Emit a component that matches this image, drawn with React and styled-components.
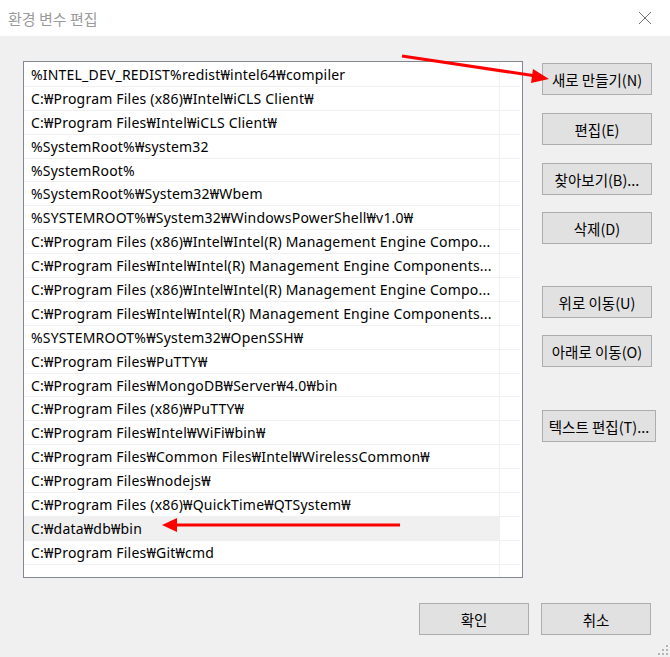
import React from 'react';
import styled, { createGlobalStyle } from 'styled-components';

/*
* 환경 변수 편집 대화상자
 */
const paths = [
  '%INTEL_DEV_REDIST%redist₩intel64₩compiler',
  'C:₩Program Files (x86)₩Intel₩iCLS Client₩',
  'C:₩Program Files₩Intel₩iCLS Client₩',
  '%SystemRoot%₩system32',
  '%SystemRoot%',
  '%SystemRoot%₩System32₩Wbem',
  '%SYSTEMROOT%₩System32₩WindowsPowerShell₩v1.0₩',
  'C:₩Program Files (x86)₩Intel₩Intel(R) Management Engine Compo...',
  'C:₩Program Files₩Intel₩Intel(R) Management Engine Components...',
  'C:₩Program Files (x86)₩Intel₩Intel(R) Management Engine Compo...',
  'C:₩Program Files₩Intel₩Intel(R) Management Engine Components...',
  '%SYSTEMROOT%₩System32₩OpenSSH₩',
  'C:₩Program Files₩PuTTY₩',
  'C:₩Program Files₩MongoDB₩Server₩4.0₩bin',
  'C:₩Program Files (x86)₩PuTTY₩',
  'C:₩Program Files₩Intel₩WiFi₩bin₩',
  'C:₩Program Files₩Common Files₩Intel₩WirelessCommon₩',
  'C:₩Program Files₩nodejs₩',
  'C:₩Program Files (x86)₩QuickTime₩QTSystem₩',
  'C:₩data₩db₩bin',
  'C:₩Program Files₩Git₩cmd',
  '',
];

const sideButtons = [
  { label: '새로 만들기(N)', gap: 2 },
  { label: '편집(E)', gap: 18 },
  { label: '찾아보기(B)...', gap: 18 },
  { label: '삭제(D)', gap: 17 },
  { label: '위로 이동(U)', gap: 42 },
  { label: '아래로 이동(O)', gap: 17 },
  { label: '텍스트 편집(T)...', gap: 43, wide: true },
];

const App = () => {
  return (
    <>
      <GlobalStyle />
      <Window>
        <TitleBar>
          <Title>환경 변수 편집</Title>
          <CloseIcon width="14" height="14" viewBox="0 0 14 14">
            <path d="M1 1 L13 13 M13 1 L1 13" stroke="#6f6f6f" strokeWidth="1" fill="none" />
          </CloseIcon>
        </TitleBar>
        <Body>
          <Main>
            <PathList>
              {paths.map((p, i) => (
                <Row key={i}>
                  <Cell $selected={i === 19}>{p}</Cell>
                  <Spare />
                </Row>
              ))}
            </PathList>
            <SideColumn>
              {sideButtons.map((b) => (
                <DialogButton key={b.label} $gap={b.gap} $wide={b.wide}>
                  {b.label}
                </DialogButton>
              ))}
            </SideColumn>
          </Main>
          <Footer>
            <DialogButton>확인</DialogButton>
            <DialogButton>취소</DialogButton>
          </Footer>
          <Grip width="12" height="12" viewBox="0 0 12 12">
            <rect x="9" y="1" width="2" height="2" fill="#b5b5b5" />
            <rect x="5" y="5" width="2" height="2" fill="#b5b5b5" />
            <rect x="9" y="5" width="2" height="2" fill="#b5b5b5" />
            <rect x="1" y="9" width="2" height="2" fill="#b5b5b5" />
            <rect x="5" y="9" width="2" height="2" fill="#b5b5b5" />
            <rect x="9" y="9" width="2" height="2" fill="#b5b5b5" />
          </Grip>
        </Body>
        <Arrows width="670" height="657" viewBox="0 0 670 657">
          <line x1="402" y1="56" x2="536" y2="76" stroke="#ff0000" strokeWidth="3" />
          <polygon points="549,79 533,69 531,83" fill="#ff0000" />
          <line x1="400" y1="525" x2="175" y2="525" stroke="#ff0000" strokeWidth="3" />
          <polygon points="162,525 177,518 177,532" fill="#ff0000" />
        </Arrows>
      </Window>
    </>
  );
};

/*
* styled-components 코드
 */
const GlobalStyle = createGlobalStyle`
  html, body {
    margin: 0;
    padding: 0;
    background: #f0f0f0;
  }
  body {
    font-family: "Noto Sans", "Noto Sans CJK KR", sans-serif;
  }
`;

const Window = styled.div`
  position: relative;
  width: 670px;
  height: 657px;
  display: flex;
  flex-direction: column;
  background: #f0f0f0;
  overflow: hidden;
`;

const TitleBar = styled.div`
  height: 36px;
  background: #ffffff;
  display: flex;
  align-items: center;
  justify-content: space-between;
  padding: 0 18px 0 8px;
  box-sizing: border-box;
`;

const Title = styled.div`
  font-family: "Noto Sans CJK KR", sans-serif;
  font-size: 15px;
  color: #9a9a9a;
`;

const CloseIcon = styled.svg`
  display: block;
`;

const Body = styled.div`
  position: relative;
  flex: 1;
  display: flex;
  flex-direction: column;
  padding: 25px 0 0 23px;
  box-sizing: border-box;
`;

const Main = styled.div`
  display: flex;
  align-items: flex-start;
`;

const PathList = styled.div`
  width: 500px;
  height: 517px;
  box-sizing: border-box;
  border: 1px solid #828790;
  background: #ffffff;
  padding-top: 1px;
  overflow: hidden;
`;

const Row = styled.div`
  display: flex;
  height: 23.9px;
  box-sizing: border-box;
  border-bottom: 1px solid #f0f0f0;
  margin-right: 2px;
`;

const Cell = styled.div`
  width: 476px;
  box-sizing: border-box;
  padding: 0 4px 0 7px;
  border-right: 1px solid #f0f0f0;
  background: ${(p) => (p.$selected ? '#f0f0f0' : 'transparent')};
  font-size: 14px;
  letter-spacing: 0.2px;
  line-height: 23px;
  color: #000000;
  white-space: nowrap;
  overflow: hidden;
  text-overflow: clip;
`;

const Spare = styled.div`
  flex: 1;
`;

const SideColumn = styled.div`
  display: flex;
  flex-direction: column;
  align-items: flex-start;
  margin-left: 19px;
`;

const DialogButton = styled.button`
  width: ${(p) => (p.$wide ? '114px' : '110px')};
  height: 32px;
  margin-top: ${(p) => (p.$gap ? `${p.$gap}px` : '0')};
  padding: 0;
  box-sizing: border-box;
  background: #e1e1e1;
  border: 1px solid #adadad;
  border-radius: 0;
  font-family: "Noto Sans CJK KR", sans-serif;
  font-size: 14.5px;
  color: #000000;
  white-space: nowrap;
`;

const Footer = styled.div`
  display: flex;
  justify-content: flex-end;
  gap: 12px;
  margin-top: 25px;
  padding-right: 19px;
`;

const Grip = styled.svg`
  position: absolute;
  right: 1px;
  bottom: 1px;
`;

const Arrows = styled.svg`
  position: absolute;
  left: 0;
  top: 0;
  pointer-events: none;
`;

export default App;
